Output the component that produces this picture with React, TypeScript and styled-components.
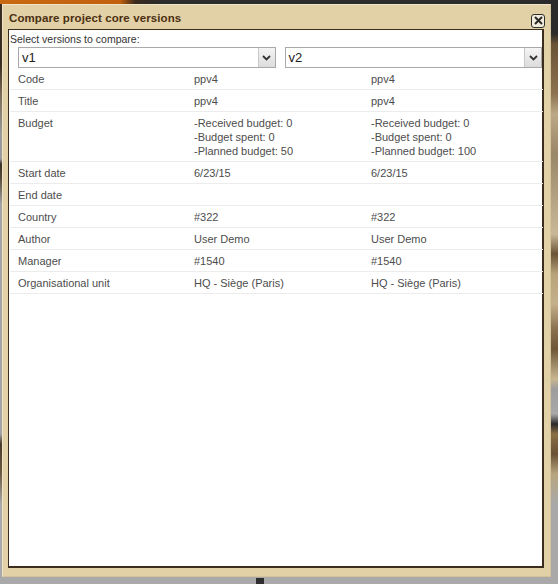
import React from "react";
import styled, { createGlobalStyle } from "styled-components";

const Global = createGlobalStyle`
  html, body { margin: 0; padding: 0; }
  body { width: 558px; height: 584px; overflow: hidden; background: #a9a9a9; font-family: "Liberation Sans", Arial, sans-serif; }
`;

const Page = styled.div`
  position: relative;
  width: 558px;
  height: 584px;
  display: grid;
  grid-template-rows: 4px 1fr;
  background: #a9a9a9;
`;

const TopBand = styled.div`
  background: linear-gradient(90deg, #c96a12 0, #c2600c 120px, #3a2a1c 135px, #2b2b2b 160px, #2b2b2b 100%);
`;

const Body = styled.div`
  display: flex;
  justify-content: space-between;
`;

const LeftStrip = styled.div`
  width: 3px;
  background: linear-gradient(180deg, #3a2c20 0, #3a2c20 60px, #7b6a55 90px, #9a9a9a 130px, #9a9a9a 155px, #3a3228 160px, #5a4c3a 175px, #a3a3a3 200px, #a3a3a3 430px, #4a3a2a 440px, #6d5a42 470px, #a9a9a9 500px);
`;

const RightStrip = styled.div`
  width: 7px;
  background: linear-gradient(180deg, #2b2b2b 0, #2b2b2b 30px, #6a5236 40px, #8c7250 90px, #bca886 110px, #9a8668 150px, #c9b898 230px, #6b5335 250px, #b8a27a 270px, #c4b08a 300px, #8a7150 325px, #6e5637 345px, #c8b690 375px, #9d9d9d 385px, #a8a8a8 410px, #2a2a2a 420px, #8a6f45 430px, #6a5234 450px, #b7a57f 470px, #a9a9a9 500px);
`;

const BottomMark = styled.div`
  position: absolute;
  left: 256px;
  top: 578px;
  width: 8px;
  height: 6px;
  background: #2e2e2e;
`;

const Dialog = styled.div`
  position: absolute;
  left: 2px;
  top: 4px;
  width: 549px;
  height: 573px;
  box-sizing: border-box;
  background: #e2d0a6;
  border: 1px solid #efe4c8;
  border-bottom-color: #d4c29a;
  border-right-color: #d4c29a;
  display: flex;
  flex-direction: column;
  padding: 0 6px 8px 5px;
`;

const TitleBar = styled.div`
  height: 24px;
  display: flex;
  align-items: center;
  justify-content: space-between;
  padding: 0 0 0 1px;
`;

const Title = styled.div`
  font-family: Tahoma, "Liberation Sans", Arial, sans-serif;
  font-weight: bold;
  font-size: 11.5px;
  color: #4a2f12;
  letter-spacing: 0.1px;
  margin-top: 1px;
`;

const CloseButton = styled.div`
  width: 14px;
  height: 14px;
  box-sizing: border-box;
  border: 1.5px solid #2f2f2a;
  border-radius: 3px;
  background: #f2ecde;
  display: flex;
  align-items: center;
  justify-content: center;
  margin-top: 7px;
  margin-right: -1px;
`;

const Content = styled.div`
  flex: 1;
  background: #fff;
  border: 1px solid #3c2c1e;
  border-right-width: 2px;
  border-bottom-width: 2px;
  display: flex;
  flex-direction: column;
`;

const SelectLabel = styled.div`
  font-size: 10.5px;
  color: #333;
  padding: 2px 0 0 1px;
  height: 14px;
  line-height: 14px;
`;

const SelectRow = styled.div`
  display: flex;
  gap: 9px;
  padding-left: 9px;
  margin-top: 1px;
`;

const SelectBox = styled.div`
  width: 258px;
  height: 21px;
  box-sizing: border-box;
  border: 1px solid #a9a9a9;
  display: flex;
  align-items: stretch;
`;

const SelectValue = styled.div`
  flex: 1;
  font-size: 13px;
  color: #222;
  padding-left: 3px;
  line-height: 20px;
`;

const ArrowBtn = styled.div`
  width: 16px;
  border-left: 1px solid #c8c8c8;
  background: linear-gradient(180deg, #f4f4f4, #dcdcdc);
  display: flex;
  align-items: center;
  justify-content: center;
`;

const Table = styled.div`
  margin-left: 1px;
  width: 533px;
  display: flex;
  flex-direction: column;
`;

const Row = styled.div`
  display: grid;
  grid-template-columns: 176px 177px 1fr;
  border-bottom: 1px solid #ececec;
  padding: 4px 0 3px;
  font-size: 11px;
  line-height: 14px;
  color: #4d4d4d;
`;

const Cell = styled.div`
  padding-left: 8px;
  min-height: 14px;
`;

const Chevron = () => (
  <svg width="9" height="6" viewBox="0 0 9 6">
    <path d="M1 1 L4.5 4.5 L8 1" fill="none" stroke="#333" strokeWidth="1.8" />
  </svg>
);

const CloseIcon = () => (
  <svg width="9" height="9" viewBox="0 0 9 9">
    <path d="M1 1 L8 8 M8 1 L1 8" stroke="#2a2a25" strokeWidth="2" />
  </svg>
);

type RowData = { label: string; a: string[]; b: string[] };

const rows: RowData[] = [
  { label: "Code", a: ["ppv4"], b: ["ppv4"] },
  { label: "Title", a: ["ppv4"], b: ["ppv4"] },
  {
    label: "Budget",
    a: ["-Received budget: 0", "-Budget spent: 0", "-Planned budget: 50"],
    b: ["-Received budget: 0", "-Budget spent: 0", "-Planned budget: 100"],
  },
  { label: "Start date", a: ["6/23/15"], b: ["6/23/15"] },
  { label: "End date", a: [], b: [] },
  { label: "Country", a: ["#322"], b: ["#322"] },
  { label: "Author", a: ["User Demo"], b: ["User Demo"] },
  { label: "Manager", a: ["#1540"], b: ["#1540"] },
  { label: "Organisational unit", a: ["HQ - Siège (Paris)"], b: ["HQ - Siège (Paris)"] },
];

const Lines = ({ items }: { items: string[] }) => (
  <Cell>
    {items.map((t, i) => (
      <div key={i}>{t}</div>
    ))}
  </Cell>
);

export default function App() {
  return (
    <>
      <Global />
      <Page>
        <TopBand />
        <Body>
          <LeftStrip />
          <RightStrip />
        </Body>
        <BottomMark />
        <Dialog>
          <TitleBar>
            <Title>Compare project core versions</Title>
            <CloseButton>
              <CloseIcon />
            </CloseButton>
          </TitleBar>
          <Content>
            <SelectLabel>Select versions to compare:</SelectLabel>
            <SelectRow>
              <SelectBox>
                <SelectValue>v1</SelectValue>
                <ArrowBtn>
                  <Chevron />
                </ArrowBtn>
              </SelectBox>
              <SelectBox>
                <SelectValue>v2</SelectValue>
                <ArrowBtn>
                  <Chevron />
                </ArrowBtn>
              </SelectBox>
            </SelectRow>
            <Table>
              {rows.map((r) => (
                <Row key={r.label}>
                  <Cell>{r.label}</Cell>
                  <Lines items={r.a} />
                  <Lines items={r.b} />
                </Row>
              ))}
            </Table>
          </Content>
        </Dialog>
      </Page>
    </>
  );
}
